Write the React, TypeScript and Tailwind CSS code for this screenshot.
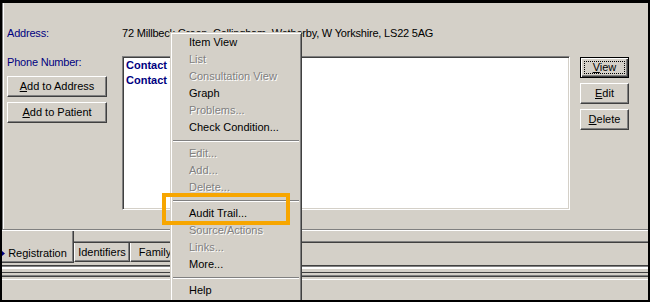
import type { ReactNode } from 'react';

const font = "font-['Liberation_Sans',Arial,sans-serif]";

type MenuEntry = { label: string; disabled?: boolean } | 'sep';

const menuEntries: MenuEntry[] = [
  { label: 'Item View' },
  { label: 'List', disabled: true },
  { label: 'Consultation View', disabled: true },
  { label: 'Graph' },
  { label: 'Problems...', disabled: true },
  { label: 'Check Condition...' },
  'sep',
  { label: 'Edit...', disabled: true },
  { label: 'Add...', disabled: true },
  { label: 'Delete...', disabled: true },
  'sep',
  { label: 'Audit Trail...' },
  { label: 'Source/Actions', disabled: true },
  { label: 'Links...', disabled: true },
  { label: 'More...' },
  'sep',
  { label: 'Help' },
];

function Button({ children, className = '' }: { children: ReactNode; className?: string }) {
  return (
    <div
      className={
        'flex items-center justify-center bg-[#d4d0c8] text-black text-[11px] leading-[13px] border border-t-white border-l-white border-r-[#404040] border-b-[#404040] shadow-[inset_-1px_-1px_0_#808080] ' +
        className
      }
    >
      {children}
    </div>
  );
}

function DefaultButton({ children, className = '' }: { children: ReactNode; className?: string }) {
  return (
    <div
      className={
        'flex items-center justify-center bg-[#d4d0c8] text-black text-[11px] leading-[13px] border border-black shadow-[inset_1px_1px_0_#fff,inset_-1px_-1px_0_#404040,inset_-2px_-2px_0_#808080] p-[3px] ' +
        className
      }
    >
      <div className="w-full h-full flex items-center justify-center border border-dotted border-black">{children}</div>
    </div>
  );
}

function ContextMenu() {
  return (
    <div className="absolute left-[168px] top-[29px] w-[132px] h-[290px] z-10 bg-[#d4d0c8] border border-t-[#d4d0c8] border-l-[#d4d0c8] border-r-[#404040] border-b-[#404040] shadow-[inset_1px_1px_0_#fff,inset_-1px_-1px_0_#808080] pt-px">
      {menuEntries.map((entry, i) =>
        entry === 'sep' ? (
          <div key={i} className="h-[9px] pt-[4px] px-[2px]">
            <div className="h-px bg-[#808080]" />
            <div className="h-px bg-white" />
          </div>
        ) : (
          <div
            key={i}
            className={
              entry.disabled
                ? 'h-[17px] leading-[17px] pl-[18px] text-[11px] text-[#808080] [text-shadow:1px_1px_0_#ffffff] whitespace-nowrap'
                : 'h-[17px] leading-[17px] pl-[18px] text-[11px] text-black whitespace-nowrap'
            }
          >
            {entry.label}
          </div>
        )
      )}
    </div>
  );
}

export default function App() {
  return (
    <div className={`w-[650px] h-[302px] bg-black pt-[3px] px-[2px] pb-[2px] ${font}`}>
      <div className="relative h-full bg-[#d4d0c8] flex flex-col overflow-hidden">
        {/* upper panel */}
        <div className="h-[227px] shrink-0 border-l border-b border-[#808080] shadow-[inset_1px_0_0_#fff] pl-[4px] pt-[24px]">
          <div className="flex h-[13px] text-[11px] leading-[13px] tracking-[-0.2px]">
            <div className="w-[115px] text-[#000080]">Address:</div>
            <div className="text-black whitespace-nowrap">72 Millbeck Green, Collingham, Wetherby, W Yorkshire, LS22 5AG</div>
          </div>

          <div className="flex items-start mt-[16px]">
            <div className="w-[115px] shrink-0 flex flex-col">
              <div className="h-[13px] text-[11px] leading-[13px] text-[#000080] tracking-[-0.2px]">Phone Number:</div>
              <Button className="w-[100px] h-[21px] mt-[7px]">
                <span><u>A</u>dd to Address</span>
              </Button>
              <Button className="w-[100px] h-[21px] mt-[5px]">
                <span><u>A</u>dd to Patient</span>
              </Button>
            </div>

            <div className="w-[448px] h-[154px] shrink-0 bg-white border border-t-[#808080] border-l-[#808080] border-r-white border-b-white shadow-[inset_1px_1px_0_#404040,inset_-1px_-1px_0_#d4d0c8] pt-[1px] pl-[3px]">
              <div className="text-[11px] leading-[15px] font-bold text-[#000080] whitespace-nowrap">Contact Tel. (Home)</div>
              <div className="text-[11px] leading-[15px] font-bold text-[#000080] whitespace-nowrap">Contact Tel. (Work)</div>
            </div>

            <div className="ml-[10px] mt-px flex flex-col gap-[5px]">
              <DefaultButton className="w-[49px] h-[21px]">
                <span><u>V</u>iew</span>
              </DefaultButton>
              <Button className="w-[49px] h-[21px]">
                <span><u>E</u>dit</span>
              </Button>
              <Button className="w-[49px] h-[21px]">
                <span><u>D</u>elete</span>
              </Button>
            </div>
          </div>
        </div>
        <div className="h-px shrink-0 bg-white" />

        {/* tab strip */}
        <div className="flex h-[32px] shrink-0">
          <div className="relative w-[72px] h-full flex items-end justify-center pb-[2px] border-r border-b border-[#404040] shadow-[inset_-1px_-1px_0_#808080] text-[11px] leading-[13px] text-black">
            <svg className="absolute left-0 bottom-[6px]" width="3" height="5" viewBox="0 0 3 5">
              <path d="M0 0 L3 2.5 L0 5 Z" fill="#000080" />
            </svg>
            Registration
          </div>
          <div className="flex-1 flex flex-col">
            <div className="h-[10px]" />
            <div className="h-px bg-[#808080]" />
            <div className="h-px bg-[#404040]" />
            <div className="flex">
              <div className="w-[56px] h-[19px] flex items-center justify-center border-l border-l-white border-r border-b border-r-[#404040] border-b-[#404040] shadow-[inset_-1px_-1px_0_#808080] text-[11px] leading-[13px] text-black">
                Identifiers
              </div>
              <div className="w-[50px] h-[19px] flex items-center justify-center border-l border-l-white border-r border-b border-r-[#404040] border-b-[#404040] shadow-[inset_-1px_-1px_0_#808080] text-[11px] leading-[13px] text-black">
                Family
              </div>
            </div>
          </div>
        </div>

        {/* lower rules */}
        <div className="h-[2px] shrink-0" />
        <div className="h-px shrink-0 bg-[#404040]" />
        <div className="h-px shrink-0 bg-[#808080]" />
        <div className="h-[2px] shrink-0 bg-white" />
        <div className="h-[3px] shrink-0" />
        <div className="h-px shrink-0 bg-[#404040]" />
        <div className="h-[2px] shrink-0" />
        <div className="h-px shrink-0 bg-[#808080]" />
        <div className="h-px shrink-0 bg-[#404040]" />
        <div className="h-[2px] shrink-0" />
        <div className="h-px shrink-0 bg-white" />

        <ContextMenu />
        <div className="absolute left-[160px] top-[190px] w-[128px] h-[32px] z-20 border-[4px] border-[#f7a600]" />
      </div>
    </div>
  );
}
